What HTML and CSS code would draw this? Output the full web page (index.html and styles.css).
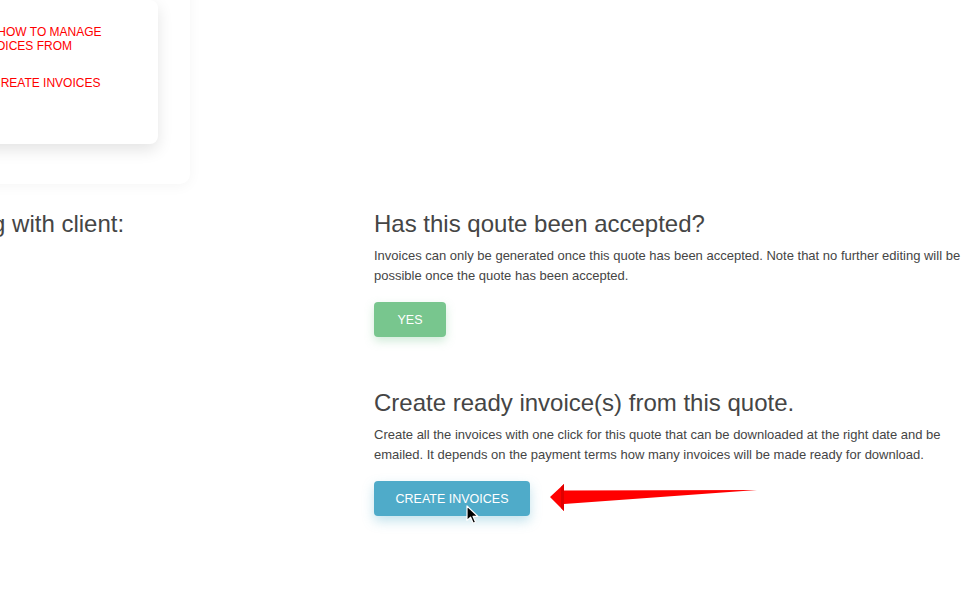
FILE: index.html
```html
<!DOCTYPE html>
<html lang="en">
<head>
<meta charset="utf-8">
<title>Quote</title>
<link rel="stylesheet" href="styles.css">
</head>
<body>
<div class="page">
  <div class="outer-card">
    <div class="card">
      <ul class="links">
        <li class="link first">ON HOW TO MANAGE<br>INVOICES FROM</li>
        <li class="link second">CREATE INVOICES</li>
      </ul>
    </div>
  </div>

  <div class="content">
    <div class="left">
      <h2 class="title">Meeting with client:</h2>
    </div>
    <div class="right">
      <section class="block">
        <h2 class="title">Has this qoute been accepted?</h2>
        <p class="text">Invoices can only be generated once this quote has been accepted. Note that no further editing will be possible once the quote has been accepted.</p>
        <button class="btn btn-green">YES</button>
      </section>
      <section class="block second-block">
        <h2 class="title">Create ready invoice(s) from this quote.</h2>
        <p class="text">Create all the invoices with one click for this quote that can be downloaded at the right date and be emailed. It depends on the payment terms how many invoices will be made ready for download.</p>
        <div class="btn-row">
          <button class="btn btn-blue">CREATE INVOICES</button>
          <svg class="cursor" width="14" height="20" viewBox="0 0 14 20">
            <path d="M1 1 L1 15.5 L4.6 12.2 L7.2 18.2 L9.6 17.2 L7 11.3 L11.8 11.3 Z" fill="#000" stroke="#fff" stroke-width="1.2" stroke-linejoin="round"/>
          </svg>
        </div>
      </section>
    </div>
  </div>

  <svg class="arrow" width="220" height="40" viewBox="540 480 220 40">
    <polygon points="550,497 564,484 564,490.6 757,490 564,504 564,511" fill="#ff0000"/>
    <polygon points="561,487 564,484 564,511 561,508" fill="#e00000"/>
  </svg>
</div>
</body>
</html>
```
FILE: styles.css
```css
* { box-sizing: border-box; }

html, body {
  margin: 0;
  padding: 0;
  background: #ffffff;
}

body {
  width: 977px;
  height: 616px;
  overflow: hidden;
  font-family: "Liberation Sans", Arial, sans-serif;
  color: #454545;
}

.page {
  position: relative;
  display: flow-root;
  width: 977px;
  height: 616px;
}

.outer-card {
  width: 430px;
  margin-left: -240px;
  margin-top: -20px;
  padding: 20px 32px 40px 0;
  background: #fff;
  border-radius: 10px;
  box-shadow: 0 2px 14px rgba(0, 0, 0, 0.045);
}

.card {
  background: #fff;
  border-radius: 8px;
  box-shadow: 0 6px 16px rgba(0, 0, 0, 0.11);
  padding: 25px 0 54px 216px;
}

.links {
  list-style: none;
  margin: 0;
  padding: 0;
  width: 140px;
  white-space: nowrap;
}

.link {
  color: #ff0000;
  font-size: 12px;
  line-height: 14px;
}

.link.second {
  margin-top: 23px;
  margin-left: 16px;
}

.content {
  display: grid;
  grid-template-columns: 454px 600px;
  margin-left: -80px;
  margin-top: 26px;
}

.title {
  margin: 0 0 8px;
  font-size: 24px;
  line-height: 28px;
  font-weight: normal;
  color: #454545;
  white-space: nowrap;
}

.text {
  margin: 0;
  width: 590px;
  font-size: 13px;
  line-height: 20px;
  color: #454545;
}

.btn {
  display: block;
  margin-top: 16px;
  height: 35px;
  padding: 2px 0 0;
  border: none;
  border-radius: 4px;
  color: #fff;
  font-family: "Liberation Sans", Arial, sans-serif;
  font-size: 12.5px;
  line-height: 33px;
}

.btn-green {
  width: 72px;
  background: #78c68e;
  box-shadow: 0 4px 10px rgba(120, 198, 142, 0.35);
}

.btn-blue {
  width: 156px;
  background: #4fabc9;
  box-shadow: 0 5px 12px rgba(79, 171, 201, 0.35);
}

.second-block {
  margin-top: 52px;
}

.btn-row {
  position: relative;
}

.cursor {
  position: absolute;
  left: 92px;
  top: 24px;
}

.arrow {
  position: absolute;
  left: 540px;
  top: 480px;
}
```
